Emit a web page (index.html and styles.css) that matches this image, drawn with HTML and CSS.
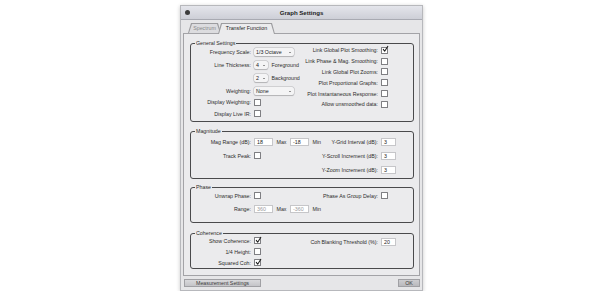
FILE: index.html
```html
<!DOCTYPE html>
<html>
<head>
<meta charset="utf-8">
<link rel="stylesheet" href="styles.css">
</head>
<body>
<div class="dialog">
  <div class="titlebar"><span class="close"></span><span class="title">Graph Settings</span></div>
  <div class="tabs">
    <span class="tab">Spectrum</span>
    <span class="tab active">Transfer Function</span>
  </div>
  <div class="panel">
    <fieldset class="group g-general">
      <legend>General Settings</legend>
      <div class="cols">
        <div class="colL">
          <div class="row r13"><span class="lbl">Frequency Scale:</span><span class="popup w40">1/3 Octave</span></div>
          <div class="row r13"><span class="lbl">Line Thickness:</span><span class="popup w14">4</span><span class="unit">Foreground</span></div>
          <div class="row r13"><span class="lbl"></span><span class="popup w14">2</span><span class="unit">Background</span></div>
          <div class="row r13"><span class="lbl">Weighting:</span><span class="popup w40">None</span></div>
          <div class="row r10"><span class="lbl">Display Weighting:</span><span class="cb"></span></div>
          <div class="row r13"><span class="lbl">Display Live IR:</span><span class="cb"></span></div>
        </div>
        <div class="colR">
          <div class="row r108"><span class="rlbl">Link Global Plot Smoothing:</span><span class="slot"><span class="cb"><svg class="tick" viewBox="0 0 8 8"><path d="M1.6 4.2 L3.3 6.4 L7.2 0.4"/></svg></span></span></div>
          <div class="row r108"><span class="rlbl">Link Phase &amp; Mag. Smoothing:</span><span class="slot"><span class="cb"></span></span></div>
          <div class="row r108"><span class="rlbl">Link Global Plot Zooms:</span><span class="slot"><span class="cb"></span></span></div>
          <div class="row r108"><span class="rlbl">Plot Proportional Graphs:</span><span class="slot"><span class="cb"></span></span></div>
          <div class="row r108"><span class="rlbl">Plot Instantaneous Response:</span><span class="slot"><span class="cb"></span></span></div>
          <div class="row r108"><span class="rlbl">Allow unsmoothed data:</span><span class="slot"><span class="cb"></span></span></div>
        </div>
      </div>
    </fieldset>

    <fieldset class="group g-mag">
      <legend>Magnitude</legend>
      <div class="cols">
        <div class="colL">
          <div class="row r14"><span class="lbl">Mag Range (dB):</span><span class="field w19">18</span><span class="unit mid">Max</span><span class="field w19">-18</span><span class="unit">Min</span></div>
          <div class="row r14"><span class="lbl">Track Peak:</span><span class="cb"></span></div>
        </div>
        <div class="colR">
          <div class="row r14"><span class="rlbl">Y-Grid Interval (dB):</span><span class="slot"><span class="field w15">3</span></span></div>
          <div class="row r14"><span class="rlbl">Y-Scroll Increment (dB):</span><span class="slot"><span class="field w15">3</span></span></div>
          <div class="row r14"><span class="rlbl">Y-Zoom Increment (dB):</span><span class="slot"><span class="field w15">3</span></span></div>
        </div>
      </div>
    </fieldset>

    <fieldset class="group g-phase">
      <legend>Phase</legend>
      <div class="cols">
        <div class="colL">
          <div class="row r13"><span class="lbl">Unwrap Phase:</span><span class="cb"></span></div>
          <div class="row r14"><span class="lbl">Range:</span><span class="field w19 off">360</span><span class="unit mid">Max</span><span class="field w19 off">-360</span><span class="unit">Min</span></div>
        </div>
        <div class="colR">
          <div class="row r13"><span class="rlbl">Phase As Group Delay:</span><span class="slot"><span class="cb"></span></span></div>
        </div>
      </div>
    </fieldset>

    <fieldset class="group g-coh">
      <legend>Coherence</legend>
      <div class="cols">
        <div class="colL">
          <div class="row r11"><span class="lbl">Show Coherence:</span><span class="cb"><svg class="tick" viewBox="0 0 8 8"><path d="M1.6 4.2 L3.3 6.4 L7.2 0.4"/></svg></span></div>
          <div class="row r11"><span class="lbl">1/4 Height:</span><span class="cb"></span></div>
          <div class="row r11"><span class="lbl">Squared Coh:</span><span class="cb"><svg class="tick" viewBox="0 0 8 8"><path d="M1.6 4.2 L3.3 6.4 L7.2 0.4"/></svg></span></div>
        </div>
        <div class="colR">
          <div class="row r13"><span class="rlbl">Coh Blanking Threshold (%):</span><span class="slot"><span class="field w15">20</span></span></div>
        </div>
      </div>
    </fieldset>
  </div>
  <div class="footer">
    <span class="btn wide">Measurement Settings</span>
    <span class="btn ok">OK</span>
  </div>
</div>
</body>
</html>
```
FILE: styles.css
```css
* { box-sizing: border-box; }
html, body { margin: 0; padding: 0; background: #ffffff; }
body {
  font-family: "Liberation Sans", Arial, sans-serif;
  font-size: 5.3px;
  color: #2b2b2b;
}

.dialog {
  width: 243px;
  height: 286px;
  margin: 5px 0 0 180px;
  background: #e6e6e8;
  border: 1px solid #b7b8bc;
  box-shadow: 0 1px 4px rgba(0,0,0,0.22);
  display: flex;
  flex-direction: column;
}

.titlebar {
  position: relative;
  height: 14px;
  flex: none;
  background: linear-gradient(#e4e5eb, #cdcfd7);
  border-bottom: 1px solid #a8aab2;
  display: flex;
  align-items: center;
  justify-content: center;
}
.title { font-weight: bold; font-size: 6.1px; color: #1c1c1c; }
.close {
  position: absolute;
  left: 3.5px;
  top: 4px;
  width: 5px;
  height: 5px;
  border-radius: 50%;
  background: #3c3c3c;
}

.tabs {
  display: flex;
  height: 10px;
  margin-top: 3px;
  padding-left: 7px;
  flex: none;
}
.tab {
  position: relative;
  height: 10px;
  line-height: 10.5px;
  text-align: center;
  color: #8a8a8a;
  z-index: 1;
}
.tab::before, .tab::after {
  content: "";
  position: absolute;
  clip-path: polygon(3px 0, calc(100% - 3px) 0, 100% 100%, 0 100%);
  z-index: -1;
}
.tab::before { inset: 0; background: #9c9c9f; }
.tab::after { inset: 1px 1px 0 1px; background: #dcdcdf; }
.tab:first-child { width: 33px; }
.tab.active {
  width: 57px;
  margin-left: -3px;
  color: #222;
  z-index: 2;
  height: 11px;
  margin-bottom: -1px;
}
.tab.active::after { background: #ebebed; inset: 1px 1px 0 1px; }

.panel {
  position: relative;
  height: 243px;
  flex: none;
  margin: 0 2px;
  background: #ebebed;
  border: 1px solid #a3a3a7;
  padding-top: 7px;
  display: flex;
  flex-direction: column;
}

.group {
  margin: 0 5px 0 6px;
  padding: 0;
  min-width: 0;
  border: 1px solid #4a4a4c;
  border-radius: 3px;
}
.group legend {
  margin-left: 4px;
  padding: 0 1px;
  line-height: 4px;
  font-size: 5.3px;
  color: #2b2b2b;
}
.g-general { padding-bottom: 1px; }
.g-mag { margin-top: 7px; padding: 1.5px 0 1.5px; }
.g-phase { margin-top: 6px; padding-bottom: 6px; }
.g-coh { margin-top: 8px; padding-bottom: 0; }

.cols { display: flex; }
.colL { flex: none; }
.colR { margin-left: auto; padding-right: 17px; }

.row {
  display: flex;
  align-items: center;
  white-space: nowrap;
}
.colR .row { justify-content: flex-end; }
.r10 { height: 10px; }
.r108 { height: 10.8px; }
.r11 { height: 11px; }
.r13 { height: 13px; }
.r14 { height: 14px; }

.lbl {
  width: 60px;
  text-align: right;
  margin-right: 3px;
  flex: none;
}
.rlbl { text-align: right; }
.slot { width: 15px; margin-left: 3px; display: flex; align-items: center; }

.unit { margin-left: 3.5px; }
.unit.mid { margin-right: 3.5px; }

.popup {
  position: relative;
  display: flex;
  align-items: center;
  height: 8px;
  padding-left: 2px;
  border-radius: 2px;
  background: #f4f4f5;
  box-shadow: 0 0 0 0.5px #b9b9bc, 0 0.6px 0.8px rgba(0,0,0,0.25);
  color: #222;
}
.popup::after {
  content: "";
  margin-left: auto;
  margin-right: 3px;
  border-left: 1.4px solid transparent;
  border-right: 1.4px solid transparent;
  border-top: 1.8px solid #333;
  margin-top: 1px;
}
.w40 { width: 40px; }
.w14 { width: 14px; }

.field {
  display: flex;
  align-items: center;
  height: 8px;
  padding-left: 2px;
  background: #ffffff;
  border: 0.5px solid #c6c6c9;
  color: #222;
}
.field.off { color: #9a9a9c; }
.w19 { width: 19px; }
.w15 { width: 15px; }

.cb {
  position: relative;
  display: inline-block;
  width: 7px;
  height: 7px;
  background: #ffffff;
  border: 1px solid #7e7e82;
  border-radius: 0.5px;
  flex: none;
}
.tick {
  position: absolute;
  left: 0;
  top: -1.5px;
  width: 6.5px;
  height: 6.5px;
  overflow: visible;
}
.tick path {
  fill: none;
  stroke: #1e1e1e;
  stroke-width: 1.3;
  stroke-linecap: round;
  stroke-linejoin: round;
}

.footer {
  display: flex;
  justify-content: space-between;
  margin: 3px 2px 0 3px;
  flex: none;
}
.btn {
  display: flex;
  align-items: center;
  justify-content: center;
  height: 8px;
  background: linear-gradient(#d9d9dc, #c4c4c8);
  border: 0.5px solid #a0a0a4;
  color: #3a3a3a;
}
.btn.wide { width: 77px; }
.btn.ok { width: 22px; background: linear-gradient(#cdcdd0, #b9b9bd); }
```
